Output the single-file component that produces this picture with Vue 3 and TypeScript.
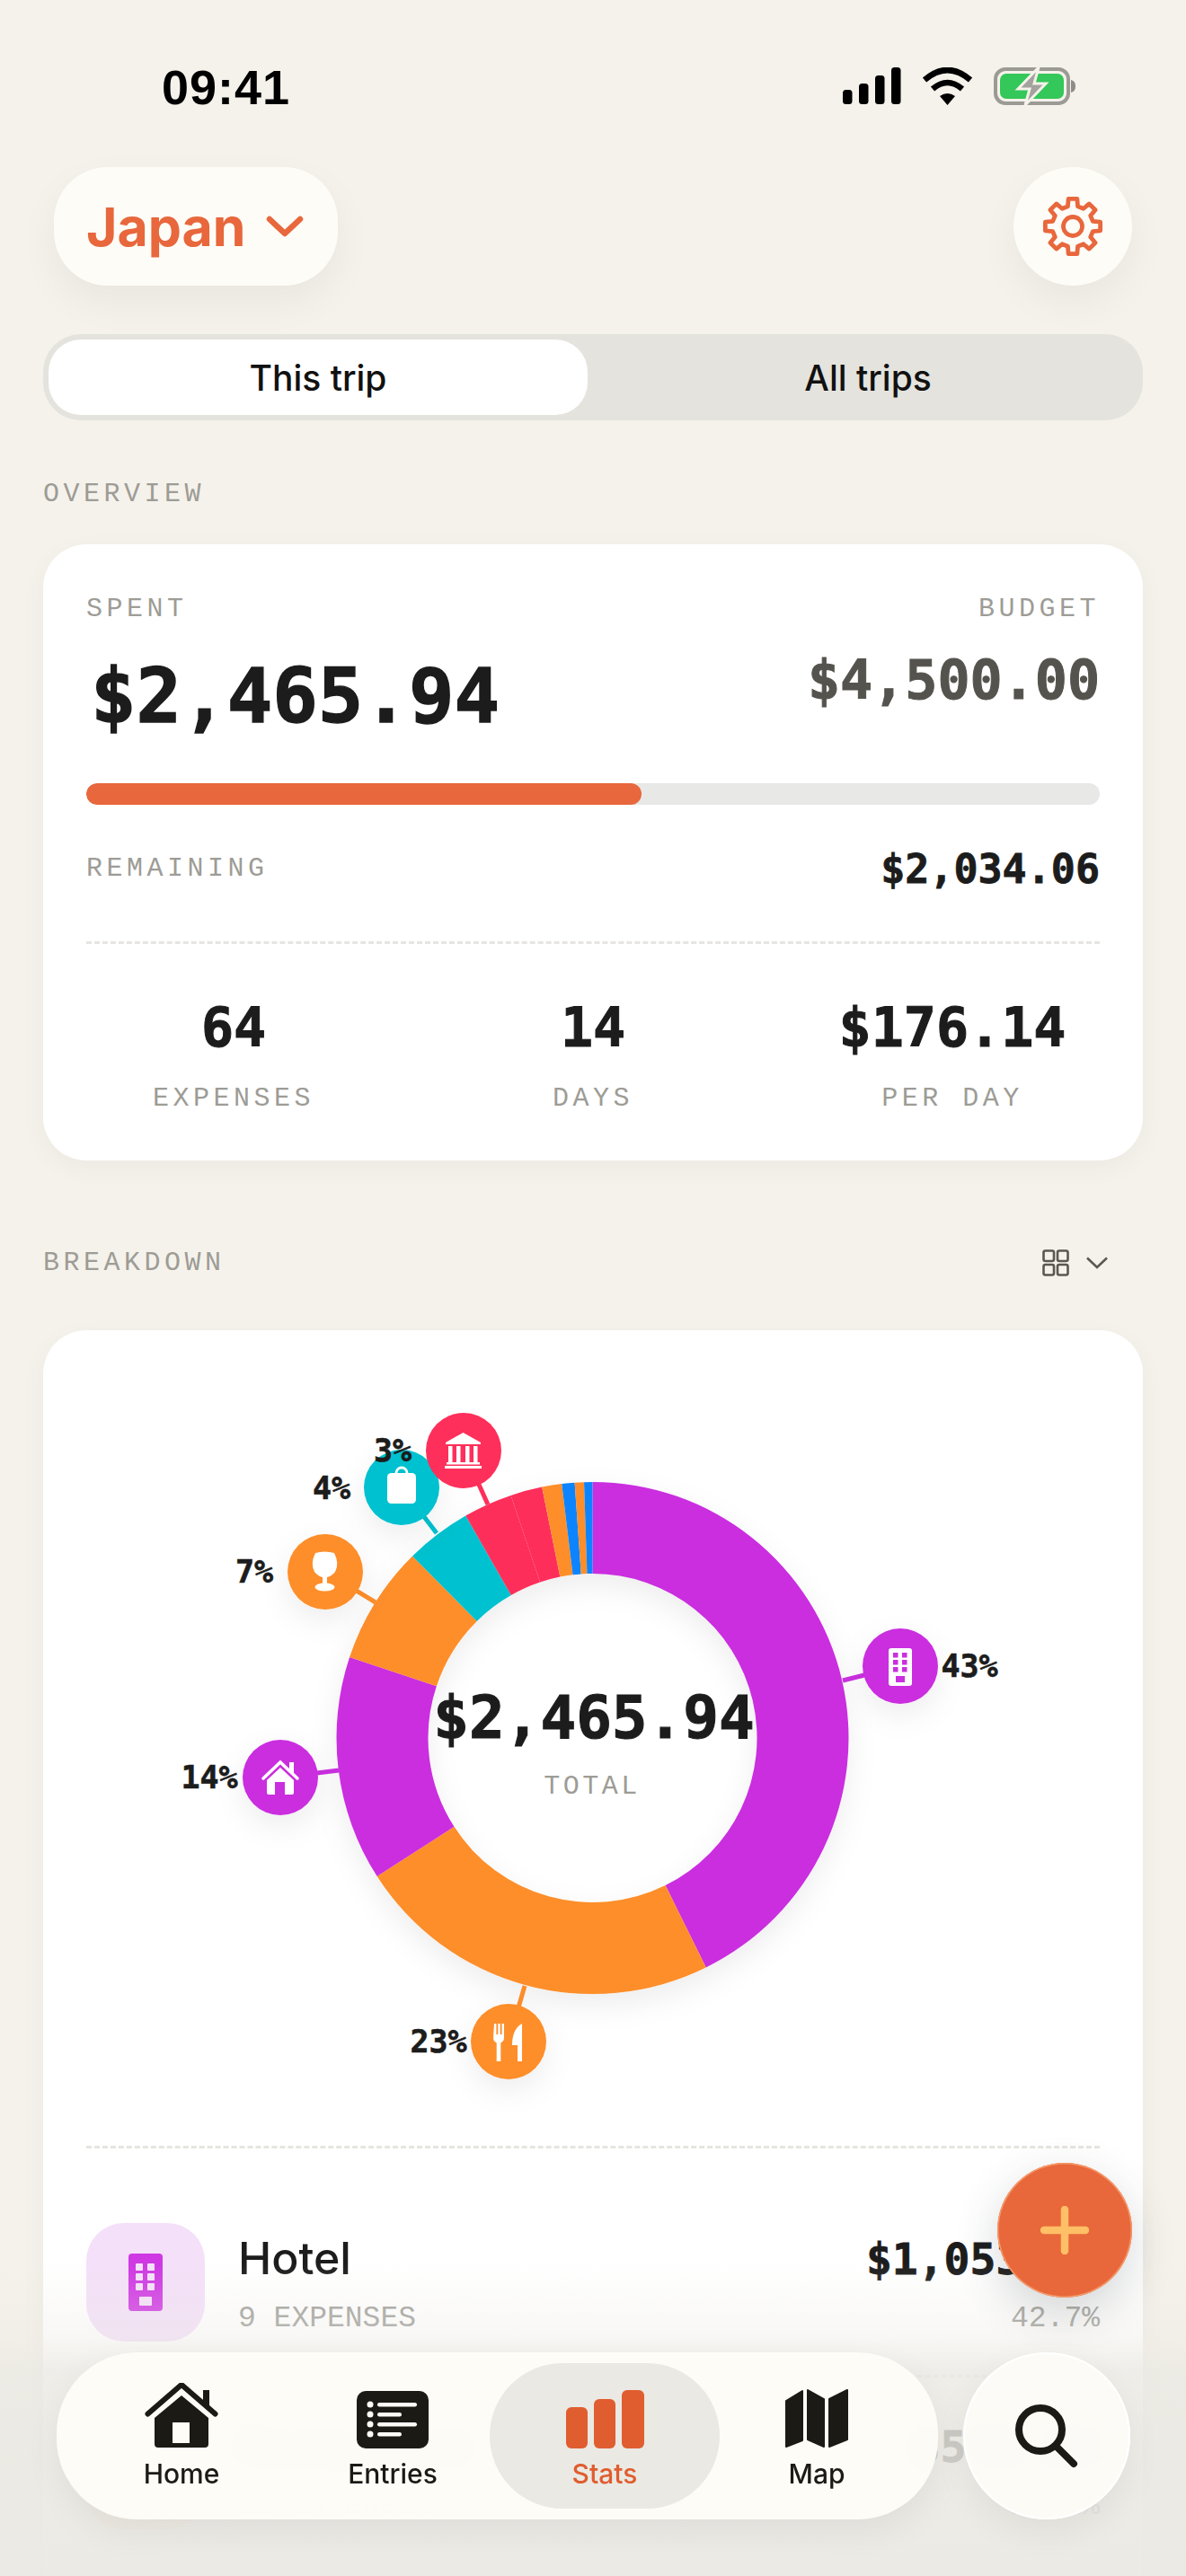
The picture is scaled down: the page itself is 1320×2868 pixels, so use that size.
<script setup lang="ts">
const CX = 659.5
const CY = 1935
const R = 285
const r = 183

function pt(rad: number, deg: number): string {
  const a = (deg * Math.PI) / 180
  return `${(CX + rad * Math.sin(a)).toFixed(2)} ${(CY - rad * Math.cos(a)).toFixed(2)}`
}
function arc(from: number, to: number): string {
  const large = to - from > 180 ? 1 : 0
  return `M${pt(R, from)} A${R} ${R} 0 ${large} 1 ${pt(R, to)} L${pt(r, to)} A${r} ${r} 0 ${large} 0 ${pt(r, from)} Z`
}
const PURPLE = '#ca2fdf'
const ORANGE = '#fd8e2a'
const TEAL = '#00c1cf'
const PINK = '#fe2f5a'
const BLUE = '#0a84ff'

const segments = [
  { from: 0, to: 153.7, color: PURPLE },
  { from: 153.7, to: 237.3, color: ORANGE },
  { from: 237.3, to: 288.4, color: PURPLE },
  { from: 288.4, to: 315.3, color: ORANGE },
  { from: 315.3, to: 330.3, color: TEAL },
  { from: 330.3, to: 341.4, color: PINK },
  { from: 341.4, to: 348.6, color: PINK },
  { from: 348.6, to: 353.1, color: ORANGE },
  { from: 353.1, to: 356, color: BLUE },
  { from: 356, to: 358.1, color: ORANGE },
  { from: 358.1, to: 360, color: BLUE },
].map((s) => ({ ...s, d: arc(s.from, s.to) }))

const bubbles = [
  { x: 1002, y: 1855, color: PURPLE, lx: 1079, ly: 1855, label: '43%', ex: 938, ey: 1871 },
  { x: 566, y: 2273, color: ORANGE, lx: 488, ly: 2273, label: '23%', ex: 584, ey: 2211 },
  { x: 312, y: 1979, color: PURPLE, lx: 233, ly: 1979, label: '14%', ex: 377, ey: 1971 },
  { x: 362, y: 1750, color: ORANGE, lx: 283, ly: 1750, label: '7%', ex: 418, ey: 1784 },
  { x: 447, y: 1656, color: TEAL, lx: 369, ly: 1657, label: '4%', ex: 486, ey: 1707 },
  { x: 516, y: 1615, color: PINK, lx: 437, ly: 1615, label: '3%', ex: 543, ey: 1675 },
]

function gearPath(): string {
  const c = 34
  const out: string[] = []
  for (let i = 0; i < 8; i++) {
    const a = i * 45
    const p = (rad: number, deg: number) => {
      const t = ((a + deg) * Math.PI) / 180
      return `${(c + rad * Math.sin(t)).toFixed(2)} ${(c - rad * Math.cos(t)).toFixed(2)}`
    }
    out.push(`${i === 0 ? 'M' : 'L'}${p(23, -14)}`, `L${p(31, -9)}`, `L${p(31, 9)}`, `L${p(23, 14)}`)
  }
  return out.join(' ') + ' Z'
}
const gear = gearPath()

const navItems = [
  { key: 'home', label: 'Home' },
  { key: 'entries', label: 'Entries' },
  { key: 'stats', label: 'Stats' },
  { key: 'map', label: 'Map' },
]
</script>

<template>
  <div class="page">
    <div class="status">
      <span class="time">09:41</span>
      <div class="status-icons">
        <svg width="65" height="42" viewBox="0 0 65 42" fill="#000">
          <rect x="0" y="25" width="10.5" height="16" rx="3.5" />
          <rect x="18" y="18" width="10.5" height="23" rx="3.5" />
          <rect x="36" y="9" width="10.5" height="32" rx="3.5" />
          <rect x="54" y="0" width="10.5" height="41" rx="3.5" />
        </svg>
        <svg width="57" height="42" viewBox="0 0 57 42" fill="none" stroke="#000" stroke-width="6.5">
          <path d="M3 14 Q28.5 -8 54 14" />
          <path d="M12 24 Q28.5 10 45 24" />
          <path d="M20 32 Q28.5 26 37 32 L28.5 42 Z" fill="#000" stroke="none" />
        </svg>
        <svg width="92" height="42" viewBox="0 0 92 42">
          <rect x="2" y="2" width="81" height="38" rx="11" fill="none" stroke="#9b9a95" stroke-width="4" />
          <rect x="7" y="7" width="71" height="28" rx="7" fill="#34c759" />
          <path d="M86 14 C90 15 91 18 91 21 C91 24 90 27 86 28 Z" fill="#8d8c88" />
          <path d="M50 0 L27 24 H40 L35 42 L58 18 H45 Z" fill="#a3a29d" stroke="#f5f2eb" stroke-width="3" />
        </svg>
      </div>
    </div>

    <header class="header">
      <button class="trip">
        <span>Japan</span>
        <svg width="42" height="24" viewBox="0 0 42 24" fill="none" stroke="#e8673c" stroke-width="6.5" stroke-linecap="round" stroke-linejoin="round">
          <path d="M4 4 L21 20 L38 4" />
        </svg>
      </button>
      <button class="gear">
        <svg width="68" height="68" viewBox="0 0 68 68" fill="none" stroke="#e8673c" stroke-width="4.8" stroke-linejoin="round">
          <path :d="gear" />
          <circle cx="34" cy="34" r="10.5" />
        </svg>
      </button>
    </header>

    <div class="segment">
      <div class="seg active">This trip</div>
      <div class="seg other">All trips</div>
    </div>

    <div class="section-label overview-label">OVERVIEW</div>

    <section class="card overview">
      <div class="top-row">
        <div>
          <div class="label">SPENT</div>
          <div class="spent">$2,465.94</div>
        </div>
        <div class="right">
          <div class="label">BUDGET</div>
          <div class="budget">$4,500.00</div>
        </div>
      </div>
      <div class="track"><div class="fill" :style="{ width: '54.8%' }"></div></div>
      <div class="remain">
        <span class="label">REMAINING</span>
        <span class="remain-val">$2,034.06</span>
      </div>
      <div class="dash"></div>
      <div class="stats">
        <div class="stat"><div class="stat-val">64</div><div class="label stat-label">EXPENSES</div></div>
        <div class="stat"><div class="stat-val">14</div><div class="label stat-label">DAYS</div></div>
        <div class="stat"><div class="stat-val">$176.14</div><div class="label stat-label">PER DAY</div></div>
      </div>
    </section>

    <div class="breakdown-head">
      <span class="section-label">BREAKDOWN</span>
      <div class="view-toggle">
        <svg width="30" height="30" viewBox="0 0 30 30" fill="none" stroke="#5a5852" stroke-width="2.6">
          <rect x="1.5" y="1.5" width="11.5" height="11.5" rx="2" />
          <rect x="17" y="1.5" width="11.5" height="11.5" rx="2" />
          <rect x="1.5" y="17" width="11.5" height="11.5" rx="2" />
          <rect x="17" y="17" width="11.5" height="11.5" rx="2" />
        </svg>
        <svg width="24" height="14" viewBox="0 0 24 14" fill="none" stroke="#5a5852" stroke-width="2.6">
          <path d="M1 1.5 L12 12 L23 1.5" />
        </svg>
      </div>
    </div>

    <section class="card breakdown">
      <svg class="chart" width="1224" height="908" viewBox="48 1481 1224 908">
        <defs>
          <filter id="soft" x="-30%" y="-30%" width="160%" height="170%">
            <feDropShadow dx="0" dy="12" stdDeviation="16" flood-color="#000" flood-opacity="0.07" />
          </filter>
        </defs>
        <g filter="url(#soft)">
          <path v-for="(s, i) in segments" :key="i" :d="s.d" :fill="s.color" />
        </g>
        <line v-for="b in bubbles" :key="'l' + b.label" :x1="b.x" :y1="b.y" :x2="b.ex" :y2="b.ey" :stroke="b.color" stroke-width="5" />
        <g filter="url(#soft)">
          <circle v-for="b in bubbles.slice(0, 5)" :key="'c' + b.label" :cx="b.x" :cy="b.y" r="42" :fill="b.color" />
        </g>

        <!-- hotel -->
        <g>
          <rect x="989" y="1835" width="26" height="42" rx="3" fill="#fff" />
          <g :fill="PURPLE">
            <rect x="994" y="1840" width="5.5" height="5.5" /><rect x="1004" y="1840" width="5.5" height="5.5" />
            <rect x="994" y="1848" width="5.5" height="5.5" /><rect x="1004" y="1848" width="5.5" height="5.5" />
            <rect x="994" y="1856" width="5.5" height="5.5" /><rect x="1004" y="1856" width="5.5" height="5.5" />
            <rect x="997" y="1866" width="10" height="7" />
          </g>
        </g>
        <!-- home -->
        <g>
          <path d="M293 1980 L312 1962 L331 1980" fill="none" stroke="#fff" stroke-width="3.5" stroke-linecap="round" />
          <rect x="322" y="1962" width="5" height="12" fill="#fff" />
          <path d="M312 1968 L327 1982 V1996 a2 2 0 0 1 -2 2 H299 a2 2 0 0 1 -2 -2 V1982 Z" fill="#fff" />
          <rect x="306" y="1984" width="11" height="14" :fill="PURPLE" />
        </g>
        <!-- fork and knife -->
        <g fill="#fff">
          <path d="M550 2253 h2.4 v12 h1.9 v-12 h2.4 v12 h1.9 v-12 h2.4 v16 c0 3 -2 4.5 -3.7 5.4 V2295 h-4.6 v-20.6 c-1.7 -0.9 -3.7 -2.4 -3.7 -5.4 Z" />
          <path d="M581 2253 V2295 h-5 V2277 h-6 c0 -10 3 -20 11 -24 Z" />
        </g>
        <!-- wine -->
        <g fill="#fff">
          <path d="M351 1729 Q361.5 1726 372 1729 Q378 1741 373 1750 Q369 1755 364 1756 V1766 H359 V1756 Q354 1755 350 1750 Q345 1741 351 1729 Z" />
          <ellipse cx="361.5" cy="1767" rx="11" ry="4.5" />
        </g>
        <!-- bag -->
        <g>
          <path d="M441 1640 a6 6 0 0 1 12 0" fill="none" stroke="#fff" stroke-width="2.8" />
          <rect x="431" y="1640" width="32" height="34" rx="4.5" fill="#fff" />
        </g>

        <!-- pink bubble and 3% go over the teal one -->
        <text v-for="b in bubbles.slice(0, 5)" :key="'t' + b.label" class="pct" :x="b.lx" :y="b.ly" text-anchor="middle" dominant-baseline="central">{{ b.label }}</text>
        <circle cx="516" cy="1615" r="42" :fill="PINK" />
        <g fill="#fff">
          <path d="M515.5 1595 L535 1606 V1608 H496 V1606 Z" />
          <rect x="499" y="1610" width="4.5" height="18" /><rect x="508" y="1610" width="4.5" height="18" />
          <rect x="518" y="1610" width="4.5" height="18" /><rect x="527" y="1610" width="4.5" height="18" />
          <rect x="497" y="1628" width="37" height="2.5" /><rect x="495" y="1632" width="41" height="3" />
        </g>
        <text class="pct" x="437" y="1615" text-anchor="middle" dominant-baseline="central">3%</text>

        <text class="center-val" x="661" y="1912" text-anchor="middle" dominant-baseline="central">$2,465.94</text>
        <text class="center-label" x="659" y="1989" text-anchor="middle" dominant-baseline="central">TOTAL</text>
      </svg>

      <div class="dash list-dash"></div>
      <div class="list">
        <div class="row">
          <div class="cat hotel-cat">
            <svg width="38" height="64" viewBox="0 0 38 64">
              <rect width="38" height="64" rx="4" fill="#cf38e3" />
              <g fill="#f4e0f9">
                <rect x="8" y="11" width="8" height="8" rx="1" /><rect x="21" y="11" width="8" height="8" rx="1" />
                <rect x="8" y="22" width="8" height="8" rx="1" /><rect x="21" y="22" width="8" height="8" rx="1" />
                <rect x="8" y="33" width="8" height="8" rx="1" /><rect x="21" y="33" width="8" height="8" rx="1" />
                <rect x="12" y="48" width="14" height="10" rx="1" />
              </g>
            </svg>
          </div>
          <div class="row-text">
            <div class="row-name">Hotel</div>
            <div class="row-sub">9 EXPENSES</div>
          </div>
          <div class="row-right">
            <div class="row-amount">$1,053.00</div>
            <div class="row-pct">42.7%</div>
          </div>
        </div>
        <div class="row next-row">
          <div class="cat food-cat"></div>
          <div class="row-text">
            <div class="row-name">Restaurant</div>
            <div class="row-sub">21 EXPENSES</div>
          </div>
          <div class="row-right">
            <div class="row-amount shifted">$572.34</div>
            <div class="row-pct">23.2%</div>
          </div>
        </div>
      </div>
    </section>

    <div class="fade"></div>

    <button class="fab">
      <svg width="54" height="54" viewBox="0 0 54 54" stroke="#ffbf66" stroke-width="8.5" stroke-linecap="round">
        <path d="M27 4 V50 M4 27 H50" />
      </svg>
    </button>

    <nav class="nav">
      <div v-for="item in navItems" :key="item.key" class="nav-item" :class="[item.key, { current: item.key === 'stats' }]">
        <svg v-if="item.key === 'home'" width="82" height="73" viewBox="0 0 82 73">
          <path d="M3.5 34.5 L41 2 L78.5 34.5" fill="none" stroke="#1c1a14" stroke-width="6" stroke-linecap="round" stroke-linejoin="round" />
          <rect x="65" y="8" width="7" height="18" fill="#1c1a14" />
          <path d="M41 14 L71 39 V68 a4 4 0 0 1 -4 4 H15 a4 4 0 0 1 -4 -4 V39 Z" fill="#1c1a14" />
          <rect x="31" y="44" width="19" height="23" fill="#fdfcf7" />
        </svg>
        <svg v-else-if="item.key === 'entries'" width="80" height="64" viewBox="0 0 80 64">
          <rect width="80" height="64" rx="10" fill="#1c1a14" />
          <g fill="#fdfcf7">
            <circle cx="15" cy="15" r="3.5" /><circle cx="15" cy="26" r="3.5" /><circle cx="15" cy="37" r="3.5" /><circle cx="15" cy="48" r="3.5" />
            <rect x="23" y="13" width="44" height="4.5" rx="2.2" /><rect x="23" y="24" width="27" height="4.5" rx="2.2" />
            <rect x="23" y="35" width="44" height="4.5" rx="2.2" /><rect x="23" y="46" width="27" height="4.5" rx="2.2" />
          </g>
        </svg>
        <svg v-else-if="item.key === 'stats'" width="87" height="65" viewBox="0 0 87 65" fill="#e05d30">
          <rect x="0" y="19" width="24" height="46" rx="6" />
          <rect x="31" y="10" width="24" height="55" rx="6" />
          <rect x="62" y="0" width="25" height="65" rx="6" />
        </svg>
        <svg v-else width="72" height="66" viewBox="0 0 72 66" fill="#1c1a14" stroke="#1c1a14" stroke-width="2" stroke-linejoin="round">
          <path d="M2 13 L20 2 V57 L2 64 Z" />
          <path d="M26 1 L44 11 V64 L26 56 Z" />
          <path d="M50 11 L70 1 V56 L50 64 Z" />
        </svg>
        <span class="nav-text">{{ item.label }}</span>
      </div>
    </nav>

    <button class="search">
      <svg width="72" height="72" viewBox="0 0 72 72" fill="none" stroke="#1c1a14" stroke-width="8" stroke-linecap="round">
        <circle cx="29" cy="29" r="24" />
        <path d="M46 47 L66 67" />
      </svg>
    </button>
  </div>
</template>

<style>
html,
body {
  margin: 0;
  background: #f5f2eb;
}
</style>

<style scoped>
.page {
  position: relative;
  width: 1320px;
  height: 2868px;
  overflow: hidden;
  background: #f5f2eb;
  font-family: Inter, "Liberation Sans", sans-serif;
  color: #1c1c1c;
}
button {
  border: 0;
  padding: 0;
  font: inherit;
}
.status {
  height: 186px;
  box-sizing: border-box;
  padding: 75px 122px 0 180px;
  display: flex;
  justify-content: space-between;
  align-items: flex-start;
}
.time {
  font-family: "Liberation Sans", sans-serif;
  font-size: 54px;
  font-weight: 700;
  line-height: 44px;
  color: #000;
  letter-spacing: 1px;
}
.status-icons {
  display: flex;
  align-items: flex-start;
  gap: 23px;
}
.header {
  margin: 0 60px;
  height: 132px;
  display: flex;
  justify-content: space-between;
}
.trip {
  width: 316px;
  height: 132px;
  box-sizing: border-box;
  padding: 0 38px 0 36px;
  border-radius: 60px;
  background: #fdfcf7;
  color: #e8673c;
  font-size: 59px;
  font-weight: 700;
  display: flex;
  align-items: center;
  justify-content: space-between;
  box-shadow: 0 18px 45px rgba(0, 0, 0, 0.05);
}
.gear {
  width: 132px;
  height: 132px;
  border-radius: 50%;
  background: #fdfcf7;
  display: flex;
  align-items: center;
  justify-content: center;
  box-shadow: 0 18px 45px rgba(0, 0, 0, 0.05);
}
.segment {
  margin: 54px 48px 0;
  height: 96px;
  box-sizing: border-box;
  padding: 6px;
  border-radius: 42px;
  background: #e4e3dd;
  display: flex;
}
.seg {
  flex: 1;
  display: flex;
  align-items: center;
  justify-content: center;
  font-size: 39px;
  font-weight: 500;
  color: #111;
  border-radius: 36px;
}
.seg.other {
  padding-left: 12px;
}
.seg.active {
  flex: 0 0 600px;
  background: #fff;
}
.section-label,
.label {
  font-family: "Liberation Mono", monospace;
  font-size: 30px;
  line-height: 30px;
  letter-spacing: 4.5px;
  color: #9d9c96;
}
.overview-label {
  margin: 67px 48px 0;
}
.card {
  margin: 41px 48px 0;
  background: #fff;
  border-radius: 48px;
  box-sizing: border-box;
  padding: 0 48px;
  box-shadow: 0 8px 30px rgba(0, 0, 0, 0.04);
}
.overview {
  height: 686px;
  padding-top: 57px;
}
.top-row {
  display: flex;
  justify-content: space-between;
}
.right {
  text-align: right;
}
.spent,
.budget,
.remain-val,
.stat-val,
.row-amount,
.pct,
.center-val {
  font-family: "DejaVu Sans Mono", monospace;
  font-weight: 700;
}
.spent {
  font-size: 84px;
  line-height: 90px;
  margin: 37px 0 0 5px;
  color: #1c1c1c;
  -webkit-text-stroke: 1.4px #1c1c1c;
}
.budget {
  font-size: 60px;
  line-height: 72px;
  margin-top: 28px;
  color: #55534e;
  -webkit-text-stroke: 1px #55534e;
}
.track {
  margin-top: 52px;
  height: 24px;
  border-radius: 12px;
  background: #e8e8e6;
  overflow: hidden;
}
.fill {
  height: 100%;
  border-radius: 12px;
  background: #e8673c;
}
.remain {
  margin-top: 44px;
  height: 54px;
  display: flex;
  justify-content: space-between;
  align-items: center;
}
.remain-val {
  font-size: 45px;
  color: #1c1c1c;
  -webkit-text-stroke: 0.8px #1c1c1c;
}
.dash {
  border-top: 3px dashed #e6e5e1;
}
.overview .dash {
  margin-top: 54px;
}
.stats {
  margin: 57px -36px 0;
  display: grid;
  grid-template-columns: repeat(3, 1fr);
  text-align: center;
}
.stat-val {
  font-size: 60px;
  line-height: 72px;
  color: #1c1c1c;
  -webkit-text-stroke: 1px #1c1c1c;
}
.stat-label {
  margin-top: 28px;
}
.breakdown-head {
  margin: 99px 48px 0;
  display: flex;
  justify-content: space-between;
  align-items: center;
  height: 30px;
}
.view-toggle {
  display: flex;
  align-items: center;
  gap: 19px;
  margin-right: 39px;
}
.breakdown {
  margin-top: 60px;
  height: 1500px;
}
.chart {
  display: block;
  margin: 0 -48px;
  overflow: visible;
}
.pct {
  font-size: 35px;
  fill: #1c1c1c;
  stroke: #1c1c1c;
  stroke-width: 0.6px;
}
.center-val {
  font-size: 66px;
  fill: #1c1c1c;
  stroke: #1c1c1c;
  stroke-width: 1.1px;
}
.center-label {
  font-family: "Liberation Mono", monospace;
  font-size: 30px;
  letter-spacing: 3.5px;
  fill: #9d9c96;
}
.list {
  margin-top: 46px;
}
.row {
  display: flex;
  padding: 37px 0;
}
.next-row {
  border-top: 3px dashed #e6e5e1;
}
.cat {
  width: 132px;
  height: 132px;
  border-radius: 42px;
  display: flex;
  align-items: center;
  justify-content: center;
  flex: none;
}
.hotel-cat {
  background: #f4e0f9;
}
.food-cat {
  background: #ffeeda;
}
.row-text {
  margin-left: 37px;
  flex: 1;
}
.row-name {
  margin-top: 9px;
  font-size: 50px;
  line-height: 60px;
  font-weight: 500;
  color: #1c1c1c;
}
.row-sub {
  margin-top: 20px;
  font-family: "Liberation Mono", monospace;
  font-size: 33px;
  line-height: 36px;
  color: #a09f9a;
}
.row-right {
  text-align: right;
}
.row-amount {
  margin-top: 13px;
  font-size: 48px;
  line-height: 54px;
  color: #1c1c1c;
  -webkit-text-stroke: 0.8px #1c1c1c;
}
.row-amount.shifted {
  margin-right: 4px;
}
.row-pct {
  margin-top: 22px;
  font-family: "Liberation Mono", monospace;
  font-size: 33px;
  line-height: 36px;
  color: #a09f9a;
}
.fade {
  position: absolute;
  left: 0;
  right: 0;
  bottom: 0;
  height: 430px;
  background: linear-gradient(
    to bottom,
    rgba(235, 233, 227, 0) 0%,
    rgba(235, 233, 227, 0) 19%,
    rgba(235, 233, 227, 0.35) 38%,
    rgba(235, 233, 227, 0.8) 47%,
    rgba(235, 233, 227, 0.95) 100%
  );
}
.fab {
  position: absolute;
  left: 1110px;
  top: 2408px;
  width: 150px;
  height: 150px;
  border-radius: 50%;
  background: #e8683b;
  box-shadow: 0 0 0 1.5px #f59a6a inset, 0 16px 50px rgba(50, 60, 70, 0.2);
  display: flex;
  align-items: center;
  justify-content: center;
}
.nav {
  position: absolute;
  left: 63px;
  top: 2619px;
  width: 981px;
  height: 186px;
  border-radius: 90px;
  background: rgba(253, 252, 247, 0.96);
  backdrop-filter: blur(14px);
  box-shadow: 0 14px 40px rgba(0, 0, 0, 0.06);
  display: grid;
  grid-template-columns: 278px 204px 256px 1fr;
  align-items: stretch;
}
.nav-item {
  margin: 12px 0;
  display: flex;
  flex-direction: column;
  align-items: center;
  justify-content: flex-end;
  padding-bottom: 21px;
  border-radius: 81px;
  gap: 8px;
  position: relative;
}
.nav-item.entries {
  margin-right: 12px;
}
.nav-item.map {
  margin-right: 27px;
}
.nav-item svg {
  position: absolute;
  bottom: 67px;
}
.nav-text {
  font-size: 30px;
  line-height: 36px;
  font-weight: 500;
  color: #1c1a14;
}
.nav-item.current {
  background: #eae9e3;
}
.nav-item.current .nav-text {
  color: #e05d30;
}
.search {
  position: absolute;
  left: 1072px;
  top: 2619px;
  width: 186px;
  height: 186px;
  border-radius: 50%;
  background: rgba(253, 252, 247, 0.92);
  backdrop-filter: blur(14px);
  box-shadow: inset 0 0 0 2px #fff, 0 14px 40px rgba(0, 0, 0, 0.06);
  display: flex;
  align-items: center;
  justify-content: center;
}
</style>
